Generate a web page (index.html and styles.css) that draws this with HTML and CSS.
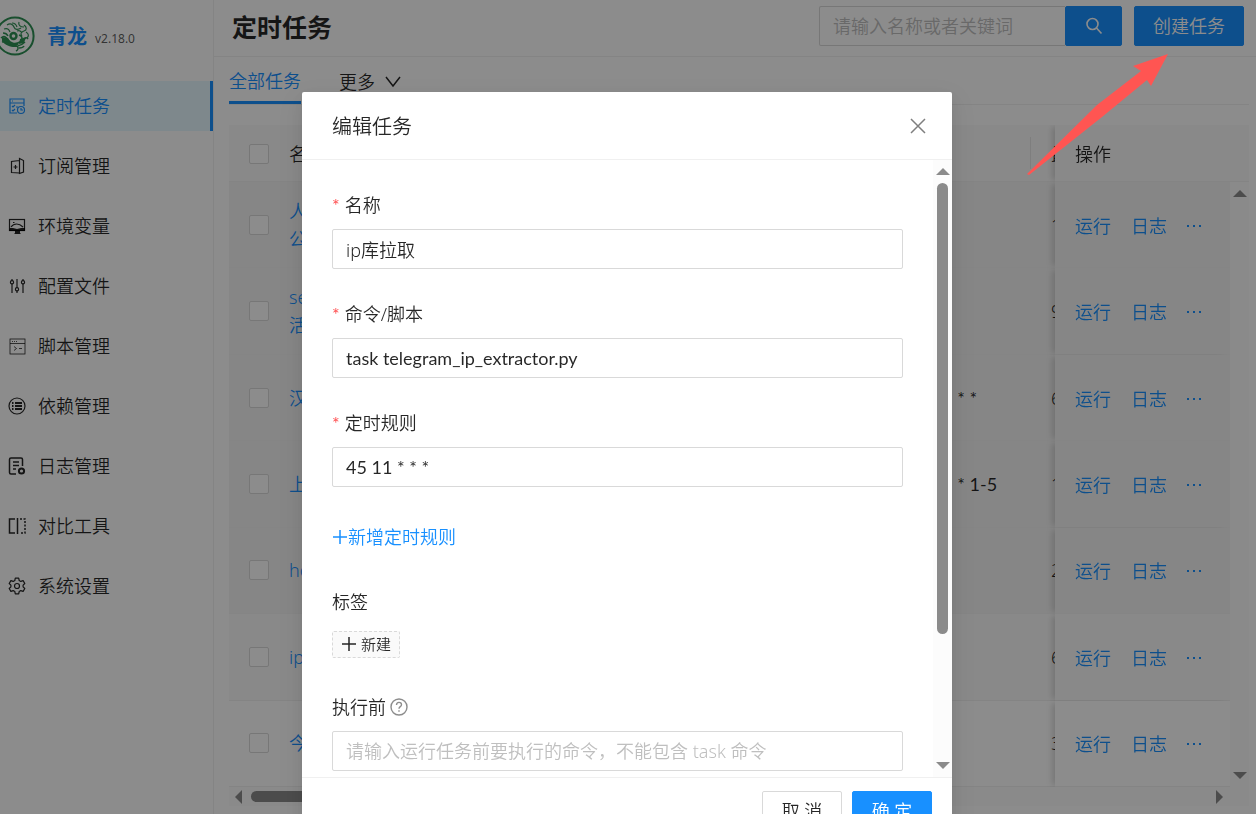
FILE: index.html
```html
<!DOCTYPE html>
<html lang="zh-CN">
<head>
  <meta charset="UTF-8">
  <title>定时任务 - 青龙</title>
  <meta name="viewport" content="width=device-width, initial-scale=1.0">
  <link rel="stylesheet" href="styles.css">
</head>
<body>

  <div class="layout">
    <aside class="sidebar">
      <div class="logo">
        <svg class="logo-img" viewBox="5 0 35 40">
          <circle cx="20" cy="20" r="18.6" stroke-width="2"/>
          <circle cx="18.500" cy="20" r="3" stroke-width="2.400"/>
          <path d="M12 9c3-2 6-1 7 2s4 3 7 1M17 7c2 0 4 1 5 4M24 6c-1 3 1 5 5 5M29 9c3 2 3 5 0 6s-4 3-2 5M9 13c3-1 5 0 6 3M31 16c3 2 3 4 1 6M22 15c2-1 4 0 5 2" stroke-width="1.200"/>
          <path d="M6 22c3-3 5-1 7 2s7 5 12 2 6-6 8-3M7 26c4-1 6 1 9 3s9 2 14-3M24 19c3 1 4 3 2 6M21 35c2-1 3-3 1-5M24 32c2 0 4 0 5-2M8 17c2 0 4 1 5 3" stroke-width="1.500"/>
          <path class="logo-fill" d="M7 21l6 1 3 5 8 1-4 3c-5 0-10-2-13-6zM25 23l6-2-2 6-5 1z"/>
        </svg>
        <span class="logo-name">青龙</span>
        <span class="logo-version">v2.18.0</span>
      </div>
      <nav class="menu">
        <a class="menu-item active" href="#">
          <svg class="icon" viewBox="0 0 18 18"><path d="M16 9V2H2v14h7M2 6h14M4 4h1M4 9l1 1 2-2M4 13l1 1 2-2"/><circle cx="13" cy="13" r="3.500"/><path d="M13 11v2h2M8 10h2"/></svg>
          <span>定时任务</span>
        </a>
        <a class="menu-item" href="#">
          <svg class="icon" viewBox="0 0 18 18"><path d="M11.500 3.500l-8 1v11l8 .5M11.500 1.500v15l4-1.500V3.500zM7.500 8v4M5.500 10h4"/></svg>
          <span>订阅管理</span>
        </a>
        <a class="menu-item" href="#">
          <svg class="icon" viewBox="0 0 18 18"><rect x="1.500" y="2.500" width="15" height="11"/><path class="solid" d="M2 11h3l4 1 4-1h4v3h-5v2l1 1H6l1-1v-2H1z"/><path d="M3 10c3-4 8-4 12 0M5 5.500h1.500"/></svg>
          <span>环境变量</span>
        </a>
        <a class="menu-item" href="#">
          <svg class="icon" viewBox="0 0 18 18"><path d="M4 2v1.500M4 7v9M9 2v8.500M9 14v2M15 2v1.500M15 7v9"/><circle cx="4" cy="5.200" r="1.600"/><circle cx="9" cy="12.200" r="1.600"/><circle cx="15" cy="5.200" r="1.600"/></svg>
          <span>配置文件</span>
        </a>
        <a class="menu-item" href="#">
          <svg class="icon thin" viewBox="0 0 18 18"><rect x="2" y="2" width="15" height="15"/><path d="M2 6.500h15M4 4.500h1M6 4.500h1M8 4.500h1M6 9.500l2.500 2-2.500 2M11 11.500h3"/></svg>
          <span>脚本管理</span>
        </a>
        <a class="menu-item" href="#">
          <svg class="icon" viewBox="0 0 18 18"><circle cx="9" cy="9" r="8"/><path class="bars" d="M4 6h1.500M7 6h7M4 9h1.500M7 9h7M4 12h1.500M7 12h7"/></svg>
          <span>依赖管理</span>
        </a>
        <a class="menu-item" href="#">
          <svg class="icon thick" viewBox="0 0 18 18"><path d="M8 17H3c-1 0-1.500-.5-1.500-1.500V2.500C1.500 1.500 2 1 3 1h10c1 0 1.500.5 1.500 1.500V9M5 5h6M5 8.500h6M5 12h3"/><circle class="bars" cx="13.500" cy="14" r="2.600"/></svg>
          <span>日志管理</span>
        </a>
        <a class="menu-item" href="#">
          <svg class="icon thick" viewBox="0 0 18 18"><path d="M7 2H1.500v14H7M9.500 1v16"/><path d="M12 2h5v14h-5" stroke-dasharray="2 1.500"/></svg>
          <span>对比工具</span>
        </a>
        <a class="menu-item" href="#">
          <svg class="icon" viewBox="0 0 18 18"><path d="M7.300 1.200h3.400l.5 2.300 1.600.9 2.300-.8 1.700 2.900-1.700 1.600v1.800l1.700 1.600-1.700 2.900-2.300-.8-1.600.9-.5 2.300H7.300l-.5-2.300-1.600-.9-2.300.8-1.700-2.900 1.700-1.600V8.100L1.200 6.500l1.700-2.900 2.300.8 1.600-.9z" stroke-linejoin="round"/><circle cx="9" cy="9" r="2.500"/></svg>
          <span>系统设置</span>
        </a>
      </nav>
    </aside>

    <main class="main">
      <header class="page-header">
        <h1>定时任务</h1>
        <form class="search">
          <input type="text" placeholder="请输入名称或者关键词" aria-label="搜索">
          <button class="btn primary search-btn" type="button" aria-label="搜索">
            <svg viewBox="0 0 18 18"><circle cx="7.500" cy="7" r="5.500"/><path d="M11.500 11l5 5.500"/></svg>
          </button>
        </form>
        <button class="btn primary create-btn" type="button">创建任务</button>
      </header>

      <section class="content">
        <div class="tabs">
          <a class="tab active" href="#">全部任务</a>
          <a class="tab" href="#">更多
            <svg class="chevron" viewBox="0 0 16 16"><path d="M1 3l7 9 7-9"/></svg>
          </a>
        </div>

        <div class="table-head">
          <table class="task-table">
            <colgroup><col class="c-check"><col class="c-name"><col class="c-cmd"><col class="c-rule"><col class="c-time"><col class="c-action-head"></colgroup>
            <thead>
              <tr>
                <th class="check"><input type="checkbox" aria-label="全选"></th>
                <th>名称</th>
                <th></th>
                <th class="split"></th>
                <th>最</th>
                <th class="fixed">操作</th>
              </tr>
            </thead>
          </table>
        </div>

        <div class="table-wrap">
          <div class="table-body">
            <table class="task-table">
              <colgroup><col class="c-check"><col class="c-name"><col class="c-cmd"><col class="c-rule"><col class="c-time"><col class="c-action"></colgroup>
              <tbody>
                <tr class="disabled">
                  <td class="check"><input type="checkbox" aria-label="选择"></td>
                  <td><a href="#">人<br>公</a></td><td></td><td class="code"></td><td>1</td>
                  <td class="fixed"><div class="actions"><a href="#">运行</a><a href="#">日志</a><a class="more" href="#" aria-label="更多"><i></i><i></i><i></i></a></div></td>
                </tr>
                <tr class="disabled">
                  <td class="check"><input type="checkbox" aria-label="选择"></td>
                  <td><a href="#">se<br>活</a></td><td></td><td class="code"></td><td>9</td>
                  <td class="fixed"><div class="actions"><a href="#">运行</a><a href="#">日志</a><a class="more" href="#" aria-label="更多"><i></i><i></i><i></i></a></div></td>
                </tr>
                <tr class="disabled">
                  <td class="check"><input type="checkbox" aria-label="选择"></td>
                  <td><a href="#">汉</a></td><td></td><td class="code">0 10 10 * * *</td><td>6</td>
                  <td class="fixed"><div class="actions"><a href="#">运行</a><a href="#">日志</a><a class="more" href="#" aria-label="更多"><i></i><i></i><i></i></a></div></td>
                </tr>
                <tr class="disabled">
                  <td class="check"><input type="checkbox" aria-label="选择"></td>
                  <td><a href="#">上</a></td><td></td><td class="code">0 20 10 * * 1-5</td><td>1</td>
                  <td class="fixed"><div class="actions"><a href="#">运行</a><a href="#">日志</a><a class="more" href="#" aria-label="更多"><i></i><i></i><i></i></a></div></td>
                </tr>
                <tr class="disabled">
                  <td class="check"><input type="checkbox" aria-label="选择"></td>
                  <td><a href="#">ho</a></td><td></td><td class="code"></td><td>2</td>
                  <td class="fixed"><div class="actions"><a href="#">运行</a><a href="#">日志</a><a class="more" href="#" aria-label="更多"><i></i><i></i><i></i></a></div></td>
                </tr>
                <tr class="current">
                  <td class="check"><input type="checkbox" aria-label="选择"></td>
                  <td><a href="#">ip</a></td><td></td><td class="code"></td><td>6</td>
                  <td class="fixed"><div class="actions"><a href="#">运行</a><a href="#">日志</a><a class="more" href="#" aria-label="更多"><i></i><i></i><i></i></a></div></td>
                </tr>
                <tr>
                  <td class="check"><input type="checkbox" aria-label="选择"></td>
                  <td><a href="#">今</a></td><td></td><td class="code"></td><td>3</td>
                  <td class="fixed"><div class="actions"><a href="#">运行</a><a href="#">日志</a><a class="more" href="#" aria-label="更多"><i></i><i></i><i></i></a></div></td>
                </tr>
              </tbody>
            </table>
          </div>
          <div class="scroll-y">
            <span class="arrow-up"></span>
            <span class="arrow-down"></span>
          </div>
        </div>
        <div class="scroll-x">
          <span class="arrow-left"></span>
          <span class="thumb"></span>
          <span class="arrow-right"></span>
        </div>
      </section>
    </main>
  </div>

  <div class="mask">
    <div class="modal" role="dialog" aria-labelledby="modalTitle">
      <div class="modal-header">
        <h2 id="modalTitle">编辑任务</h2>
        <button class="close" type="button" aria-label="关闭">
          <svg viewBox="0 0 16 16"><path d="M1 1l14 14M15 1L1 15"/></svg>
        </button>
      </div>
      <div class="modal-body">
        <form class="form">
          <div class="form-item">
            <label class="required" for="name">名称</label>
            <input class="input" id="name" type="text" value="ip库拉取">
          </div>
          <div class="form-item">
            <label class="required" for="command">命令/脚本</label>
            <input class="input code" id="command" type="text" value="task telegram_ip_extractor.py">
          </div>
          <div class="form-item">
            <label class="required" for="schedule">定时规则</label>
            <input class="input code" id="schedule" type="text" value="45 11 * * *">
          </div>
          <div class="form-item">
            <a class="add-rule" href="#"><svg class="plus" viewBox="0 0 16 16"><path d="M8 1v14M1 8h14"/></svg>新增定时规则</a>
          </div>
          <div class="form-item">
            <span class="label">标签</span>
            <div class="tag-row">
              <button class="tag-new" type="button"><svg class="plus" viewBox="0 0 16 16"><path d="M8 1v14M1 8h14"/></svg>新建</button>
            </div>
          </div>
          <div class="form-item">
            <label for="before">执行前
              <svg class="help" viewBox="0 0 18 18"><circle cx="9" cy="9" r="8"/><path d="M6.500 7c0-3.500 5-3.500 5-.3 0 2-2.500 1.800-2.500 4M9 12.300v1.400"/></svg>
            </label>
            <input class="input" id="before" type="text" placeholder="请输入运行任务前要执行的命令，不能包含 task 命令">
          </div>
        </form>
        <div class="scroll-y modal-scroll">
          <span class="arrow-up"></span>
          <span class="thumb"></span>
          <span class="arrow-down"></span>
        </div>
      </div>
      <div class="modal-footer">
        <button class="btn" type="button">取 消</button>
        <button class="btn primary" type="button">确 定</button>
      </div>
    </div>
  </div>

  <svg class="pointer" viewBox="0 0 140 120"><path d="M140 0L123 32 119 26 74 63 1 121 -1 120 69 51 113 17 105 12z"/></svg>

</body>
</html>
```
FILE: styles.css
```css
html, body {
  margin: 0;
  padding: 0;
  height: 100%;
  overflow: hidden;
}

body {
  background: #fff;
  color: rgba(0, 0, 0, 0.85);
  font-family: "Noto Sans", "Noto Sans CJK SC", sans-serif;
  font-size: 18px;
  font-weight: 350;
  line-height: 28px;
}

* {
  box-sizing: border-box;
}

input, button {
  font: inherit;
  color: inherit;
}

a {
  color: #1890ff;
  text-decoration: none;
}

svg {
  fill: none;
  stroke: currentColor;
}

.layout {
  display: flex;
  height: 100vh;
}

/* sidebar */
.sidebar {
  flex: none;
  width: 214px;
  border-right: 1px solid #f0f0f0;
}

.logo {
  display: flex;
  align-items: center;
  height: 81px;
  padding-bottom: 9px;
}

.logo-img {
  width: 35px;
  height: 40px;
  margin-right: 12px;
  color: #2f9155;
}

.logo-fill {
  fill: currentColor;
  stroke: none;
}

.logo-name {
  padding-top: 2px;
  color: #1890ff;
  font-size: 20px;
  font-weight: 700;
}

.logo-version {
  margin: 6px 0 0 8px;
  font-size: 12px;
  font-weight: 400;
  color: rgba(0, 0, 0, 0.65);
}

.menu {
  display: flex;
  flex-direction: column;
  gap: 10px;
}

.menu-item {
  display: flex;
  align-items: center;
  gap: 12px;
  height: 50px;
  padding-left: 8px;
  color: rgba(0, 0, 0, 0.85);
}

.menu-item.active {
  color: #1890ff;
  background: #e6f7ff;
  border-right: 3px solid #1890ff;
}

.icon {
  width: 18px;
  height: 18px;
  stroke-width: 1.2;
}

.icon.thick {
  stroke-width: 1.5;
}

.icon.thin {
  stroke-width: 0.8;
}

.icon .bars {
  stroke-width: 2;
}

.icon .solid {
  fill: currentColor;
  stroke: none;
}

/* page */
.main {
  flex: 1;
  min-width: 0;
  display: flex;
  flex-direction: column;
}

.page-header {
  display: flex;
  align-items: center;
  height: 57px;
  padding: 0 12px 4px 18px;
  border-bottom: 1px solid #f0f0f0;
}

.page-header h1 {
  flex: 1;
  margin: 0;
  padding-top: 2px;
  font-size: 25px;
  font-weight: 700;
}

.search {
  display: flex;
  width: 303px;
  margin-right: 12px;
}

.search input {
  flex: 1;
  min-width: 0;
  height: 40px;
  padding: 0 13px;
  border: 1px solid #d9d9d9;
  border-right: 0;
  border-radius: 2px 0 0 2px;
  background: #fff;
}

input::placeholder {
  color: #bfbfbf;
  opacity: 1;
}

.btn {
  height: 40px;
  min-width: 80px;
  padding: 0 18px;
  border: 1px solid #d9d9d9;
  border-radius: 2px;
  background: #fff;
}

.btn.primary {
  color: #fff;
  border-color: #1890ff;
  background: #1890ff;
}

.btn.search-btn {
  display: flex;
  align-items: center;
  justify-content: center;
  min-width: 57px;
}

.search-btn svg {
  flex: none;
  width: 18px;
  height: 18px;
  stroke-width: 1.6;
}

.content {
  flex: 1;
  min-height: 0;
  display: flex;
  flex-direction: column;
  padding: 0 7px 8px 15px;
}

.tabs {
  display: flex;
  flex: none;
  gap: 38px;
  height: 48px;
  margin-bottom: 20px;
  border-bottom: 1px solid #f0f0f0;
}

.tab {
  display: flex;
  align-items: center;
  gap: 10px;
  padding-top: 2px;
  color: rgba(0, 0, 0, 0.85);
}

.tab.active {
  color: #1890ff;
  border-bottom: 3px solid #1890ff;
  padding-top: 4px;
}

.chevron {
  width: 16px;
  height: 16px;
  stroke-width: 1.5;
}

/* table */
.table-head {
  flex: none;
  overflow: hidden;
}

.table-wrap {
  flex: 1;
  min-height: 0;
  display: flex;
}

.table-body {
  flex: 1;
  min-width: 0;
  overflow: hidden;
}

.task-table {
  width: 1200px;
  height: 100%;
  table-layout: fixed;
  border-collapse: separate;
  border-spacing: 0;
}

.task-table tbody tr {
  height: calc(100% / 7);
}

.c-check { width: 40px; }
.c-name { width: 280px; }
.c-cmd { width: 310px; }
.c-rule { width: 172px; }
.c-action { width: 175px; }
.c-action-head { width: 194px; }

.task-table th,
.task-table td {
  padding: 0 20px;
  text-align: left;
  background: #fff;
  border-bottom: 1px solid #f0f0f0;
}

.task-table th {
  height: 57px;
  padding-top: 2px;
  font-weight: 350;
  background: #fafafa;
}

.task-table th.split {
  background-image: linear-gradient(#e6e6e6, #e6e6e6);
  background-repeat: no-repeat;
  background-position: right center;
  background-size: 1px 32px;
}

.task-table .disabled td {
  background: #f4f4f4;
  border-color: #f2f2f2;
}

.task-table .current td {
  background: #fafafa;
}

.task-table .check {
  padding-right: 0;
}

.task-table .fixed {
  position: sticky;
  right: 0;
  box-shadow: -5px 0 6px -2px rgba(0, 0, 0, 0.15);
  clip-path: inset(0 0 0 -10px);
}

input[type="checkbox"] {
  appearance: none;
  display: block;
  width: 20px;
  height: 20px;
  margin: 0;
  border: 1px solid #d9d9d9;
  border-radius: 2px;
  background: #fff;
}

.actions {
  display: flex;
  align-items: center;
  gap: 20px;
  padding-top: 2px;
}

.more {
  display: flex;
  gap: 4px;
}

.more i {
  width: 2px;
  height: 2px;
  background: #1890ff;
}

/* scrollbars */
.scroll-y {
  flex: none;
  display: flex;
  flex-direction: column;
  align-items: center;
  justify-content: space-between;
  width: 19px;
  padding: 8px 0;
  background: #fcfcfc;
}

.scroll-x {
  flex: none;
  display: flex;
  align-items: center;
  height: 19px;
  padding: 0 26px 0 6px;
  gap: 9px;
  background: #fcfcfc;
}

.scroll-x .thumb {
  width: 70%;
  height: 11px;
  margin-right: auto;
  border-radius: 6px;
  background: #8b8b8b;
}

.arrow-up, .arrow-down {
  border: 7px solid transparent;
  border-top-width: 0;
  border-bottom: 7px solid #8b8b8b;
}

.arrow-down {
  border-top: 7px solid #8b8b8b;
  border-bottom-width: 0;
}

.arrow-left, .arrow-right {
  border: 7px solid transparent;
  border-left-width: 0;
  border-right: 7px solid #8b8b8b;
}

.arrow-right {
  border-left: 7px solid #8b8b8b;
  border-right-width: 0;
}

/* modal */
.mask {
  position: fixed;
  inset: 0;
  display: flex;
  align-items: flex-start;
  justify-content: center;
  padding: 92px 2px 0 0;
  overflow: hidden;
  background: rgba(0, 0, 0, 0.45);
}

.modal {
  width: 650px;
  max-width: 90vw;
  background: #fff;
  border-radius: 2px;
  box-shadow: 0 3px 6px -4px rgba(0, 0, 0, 0.12), 0 6px 16px rgba(0, 0, 0, 0.08), 0 9px 28px 8px rgba(0, 0, 0, 0.05);
}

.modal-header {
  display: flex;
  align-items: center;
  justify-content: space-between;
  height: 68px;
  padding: 0 26px 0 30px;
  border-bottom: 1px solid #f0f0f0;
}

.modal-header h2 {
  margin: 0;
  padding-top: 2px;
  font-size: 20px;
  font-weight: 350;
}

.close {
  display: flex;
  padding: 0;
  border: 0;
  background: none;
  color: rgba(0, 0, 0, 0.5);
}

.close svg {
  width: 16px;
  height: 16px;
  stroke-width: 1.5;
}

.modal-body {
  display: flex;
  height: calc(100vh - 197px);
  overflow: hidden;
}

.form {
  flex: 1;
  display: flex;
  flex-direction: column;
  gap: 30px;
  padding: 30px;
}

.form-item label,
.form-item .label {
  display: flex;
  align-items: center;
  height: 30px;
  margin-bottom: 9px;
}

.required::before {
  content: "*";
  margin-right: 5px;
  font-family: Lato, sans-serif;
  font-weight: 400;
  color: #ff4d4f;
}

.input {
  display: block;
  width: 100%;
  height: 40px;
  padding: 0 13px;
  border: 1px solid #d9d9d9;
  border-radius: 2px;
  background: #fff;
}

.code {
  font-family: Lato, sans-serif;
  font-weight: 400;
}

.add-rule {
  display: flex;
  align-items: center;
  height: 40px;
}

.plus {
  width: 16px;
  height: 16px;
  stroke-width: 1.5;
}

.tag-row {
  display: flex;
  align-items: center;
  height: 36px;
}

.tag-new {
  display: flex;
  align-items: center;
  gap: 4px;
  height: 27px;
  padding: 0 8px;
  border: 1px dashed #d9d9d9;
  border-radius: 2px;
  background: #fafafa;
  font-size: 15px;
}

.help {
  width: 18px;
  height: 18px;
  margin-left: 4px;
  color: rgba(0, 0, 0, 0.45);
  stroke-width: 1.4;
}

.modal-scroll .thumb {
  flex: none;
  width: 11px;
  height: 75%;
  margin: 8px 0 auto;
  border-radius: 6px;
  background: #8b8b8b;
}

.modal-footer {
  display: flex;
  justify-content: flex-end;
  gap: 10px;
  padding: 13px 20px;
  border-top: 1px solid #f0f0f0;
}

/* annotation */
.pointer {
  position: fixed;
  top: 54px;
  right: 88px;
  width: 140px;
  height: 120px;
  overflow: visible;
  fill: #ff5552;
  stroke: none;
}
```
